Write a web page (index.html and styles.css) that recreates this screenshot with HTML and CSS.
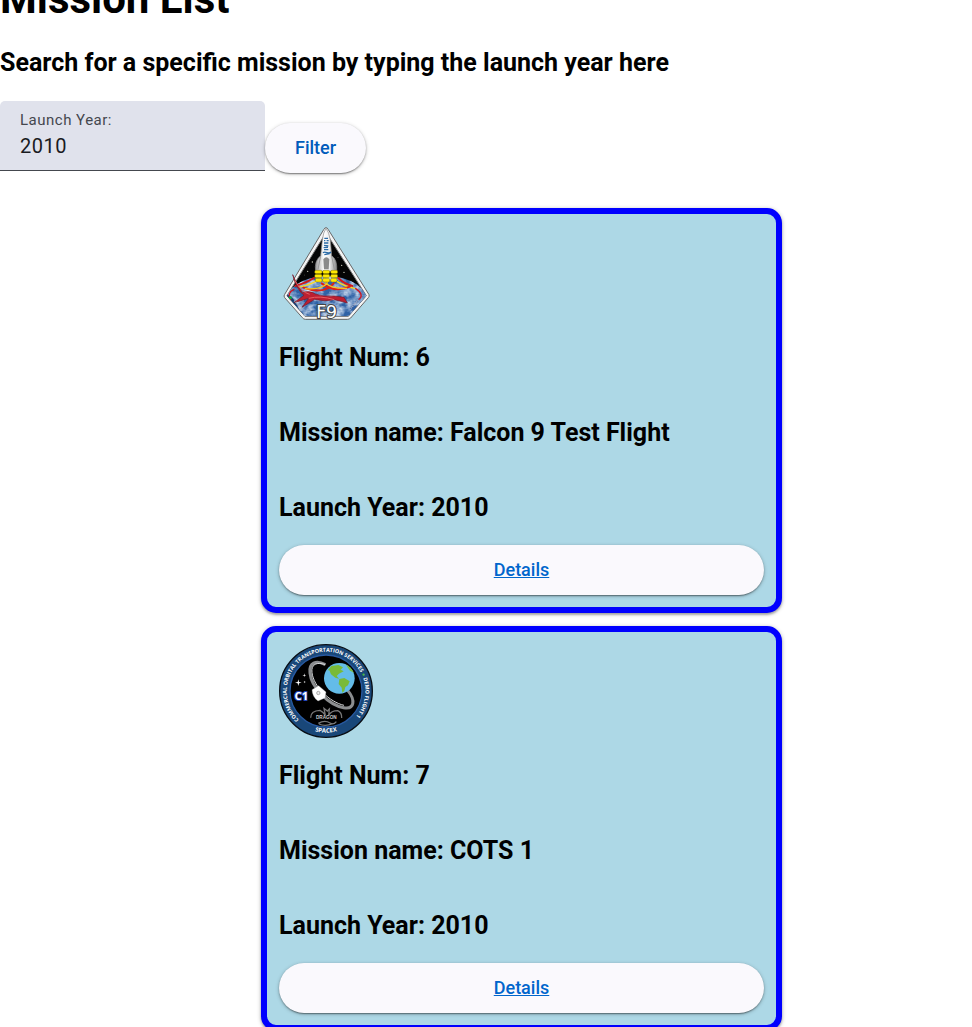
FILE: index.html
```html
<!DOCTYPE html>
<html lang="en">
<head>
<meta charset="utf-8">
<title>Mission List</title>
<link rel="stylesheet" href="styles.css">
</head>
<body>
<main class="page">
  <h1 class="page-title">Mission List</h1>
  <h2 class="page-hint">Search for a specific mission by typing the launch year here</h2>
  <form class="filter">
    <div class="field">
      <label class="field-label" for="year">Launch Year:</label>
      <input class="field-input" id="year" type="text" value="2010">
    </div>
    <button class="button" type="button">Filter</button>
  </form>

  <section class="missions">
    <article class="card">
      <svg class="patch" viewBox="12 18 282 282" role="img" aria-label="Falcon 9 Test Flight patch">
        <defs>
          <clipPath id="kite"><path d="M153 38 L274 227 L220 289 H90 L36 227Z"/></clipPath>
          <linearGradient id="hull"><stop offset="0" stop-color="#999"/><stop offset=".4" stop-color="#fff"/><stop offset=".65" stop-color="#eee"/><stop offset="1" stop-color="#888"/></linearGradient>
          <filter id="clouds" x="0" y="0" width="1" height="1">
            <feTurbulence type="fractalNoise" baseFrequency=".035 .05" numOctaves="3" seed="4"/>
            <feColorMatrix values="0 0 0 0 .8  0 0 0 0 .87  0 0 0 0 .96  2 1 0 0 -1.15"/>
            <feComposite in2="SourceGraphic" operator="in"/>
          </filter>
        </defs>
        <path d="M153 23 Q157 23 160 29 L282 224 Q284 229 280 233 L227 294 Q223 298 217 298 H91 Q86 298 82 293 L29 233 Q25 228 29 223 L146 29 Q149 23 153 23Z" fill="#f4f4f4" stroke="#666" stroke-width="3"/>
        <path d="M153 38 L274 227 L220 289 H90 L36 227Z" fill="#050505" stroke="#777" stroke-width="3"/>
        <g clip-path="url(#kite)">
          <ellipse cx="155" cy="254" rx="128" ry="86" fill="#2f62a6"/>
          <ellipse cx="155" cy="254" rx="128" ry="86" fill="#fff" filter="url(#clouds)"/>
          <path d="M34 222 q22 5 38 46 l-12 2 -30-42Z" fill="#163b70"/>
          <g fill="#ddc"><circle cx="112" cy="126" r="2"/><circle cx="98" cy="154" r="2"/><circle cx="200" cy="136" r="2"/><circle cx="207" cy="157" r="2"/><circle cx="88" cy="165" r="1"/><circle cx="189" cy="113" r="1"/></g>
        </g>
        <path d="M153 25 Q162 36 166 60 L170 107 Q188 119 185 154 H122 Q117 123 137 107 L142 60 Q145 36 153 25Z" fill="url(#hull)" stroke="#888" stroke-width="2"/>
        <path d="M145 118 q9-12 18 0 l-2 30 h-14Z" fill="#8a8a8a"/>
        <path d="M137 108 l-8 40 M170 108 l8 40" stroke="#999" stroke-width="3"/>
        <path d="M148 55h11m-12 7h4m4 0h6m-14 7h13m-13 7l13 2m-14 5l13-1m-12 7h13m-16 9c8-7 17 7 24-2m-20 8 16-3" fill="none" stroke="#2869a5" stroke-width="4"/>
        <g fill="none" stroke-linecap="round">
          <path d="M117 174 Q97 187 61 198 M190 174 Q205 190 232 198" stroke="#d21819" stroke-width="6"/>
          <path d="M122 184 Q102 195 70 202 M187 185 Q207 199 241 206" stroke="#f6d928" stroke-width="4"/>
          <path d="M85 203 Q146 225 176 190 M225 200 Q178 219 140 190" stroke="#dc2019" stroke-width="6"/>
          <path d="M91 206 Q143 210 157 188 M215 205 Q171 207 151 188" stroke="#f5c622" stroke-width="4"/>
          <path d="M57 208 Q35 218 47 239 M242 206 Q269 224 252 238" stroke="#cf1724" stroke-width="4"/>
        </g>
        <g fill="#ffe800" stroke="#4c4500" stroke-width="1"><rect x="119" y="151" width="22" height="10" rx="4"/><rect x="143" y="151" width="21" height="10" rx="4"/><rect x="167" y="151" width="21" height="10" rx="4"/><rect x="119" y="163" width="22" height="10" rx="4"/><rect x="143" y="163" width="21" height="10" rx="4"/><rect x="167" y="163" width="21" height="10" rx="4"/><rect x="121" y="175" width="20" height="11" rx="4"/><rect x="143" y="175" width="21" height="11" rx="4"/><rect x="167" y="175" width="19" height="11" rx="4"/></g>
        <path d="M53 164 L69 199 L83 218 Q103 210 121 222 Q145 231 177 228 L207 232 L217 249 L195 243 L178 239 Q147 246 119 238 L81 262 L101 235 L57 248 L87 226 Q63 207 53 164Z" fill="#bc1f31" stroke="#751628" stroke-width="2"/>
        <path d="M61 183 Q78 216 104 223 M101 235 Q135 226 178 239" fill="none" stroke="#e65d60" stroke-width="3"/>
        <circle cx="46" cy="233" r="5" fill="#16a34a"/>
        <path d="M58 242 l25 27 M250 240 l-25 28" stroke="#aab" stroke-width="5" stroke-dasharray="3 3"/>
        <text class="patch-f9" x="155" y="294" text-anchor="middle">F9</text>
      </svg>
      <h3 class="fact">Flight Num: 6</h3>
      <h3 class="fact">Mission name: Falcon 9 Test Flight</h3>
      <h3 class="fact">Launch Year: 2010</h3>
      <button class="button button-wide" type="button"><a class="link" href="#flight-6">Details</a></button>
    </article>

    <article class="card">
      <svg class="patch" viewBox="12 12 282 282" role="img" aria-label="COTS 1 patch">
        <defs>
          <path id="arc-top" d="M72 239 A118 118 0 1 1 234 239"/>
          <path id="arc-bottom" d="M64 241 A126 126 0 0 0 242 241"/>
          <clipPath id="globe"><circle cx="193" cy="115" r="46"/></clipPath>
        </defs>
        <circle cx="153" cy="153" r="139" fill="#194779" stroke="#080d14" stroke-width="4"/>
        <circle cx="153" cy="153" r="108" fill="#000" stroke="#2859a0" stroke-width="4"/>
        <text class="patch-ring"><textPath href="#arc-top">COMMERCIAL ORBITAL TRANSPORTATION SERVICES <tspan fill="#4bb749">●</tspan> DEMO FLIGHT 1</textPath></text>
        <text class="patch-ring patch-maker" text-anchor="middle"><textPath href="#arc-bottom" startOffset="50%">SPACEX</textPath></text>
        <path d="M151 74 C123 59 101 69 105 99 C109 142 160 194 206 203 C239 209 242 180 218 151" fill="none" stroke="#8b8d8f" stroke-width="9"/>
        <path d="M151 74 C127 65 107 72 111 98 C116 140 164 186 207 196" fill="none" stroke="#d6d7d8" stroke-width="3"/>
        <circle cx="193" cy="115" r="46" fill="#64bce8"/>
        <g clip-path="url(#globe)" fill="#79ba38">
          <path d="M158 91 L169 78 L190 75 L204 82 L197 89 L206 94 L192 101 L185 108 L192 116 L181 113 L168 103 L163 91Z"/>
          <path d="M193 117 L208 114 L224 124 L219 136 L211 141 L208 153 L202 158 L200 143 L191 132Z"/>
          <path d="M213 75 l20 8 5 17 -14-9Z"/>
        </g>
        <path d="M111 149 L131 137 L153 156 L150 174 L129 183 Q112 171 111 149Z" fill="#fff" stroke="#999" stroke-width="1"/>
        <circle cx="130" cy="159" r="5" fill="#eee" stroke="#888" stroke-width="2"/>
        <path d="M70 118 l2 8 8 2 -8 2 -2 8 -2-8 -8-2 8-2Z M88 100 l1 5 5 1 -5 1 -1 5 -1-5 -5-1 5-1Z M89 122 l1 3 3 1 -3 1 -1 3 -1-3 -3-1 3-1Z" fill="#fff"/>
        <text class="patch-c1" x="79" y="179" text-anchor="middle">C1</text>
        <path d="M107 233 Q107 212 135 211 Q145 216 151 226 L147 205 L157 213 L163 207 L161 226 Q169 212 188 212 Q201 218 200 234 M130 250 Q149 239 165 249 Q175 256 184 245 M132 252 Q151 261 173 251" fill="none" stroke="#777" stroke-width="4"/>
        <text class="patch-dragon" x="154" y="238" text-anchor="middle">DRAGON</text>
      </svg>
      <h3 class="fact">Flight Num: 7</h3>
      <h3 class="fact">Mission name: COTS 1</h3>
      <h3 class="fact">Launch Year: 2010</h3>
      <button class="button button-wide" type="button"><a class="link" href="#flight-7">Details</a></button>
    </article>
  </section>
</main>
</body>
</html>
```
FILE: styles.css
```css
* {
  box-sizing: border-box;
}

body {
  margin: 0;
  background: #fff;
  color: #000;
  font-family: Roboto, sans-serif;
}

.page {
  height: 100vh;
  overflow: hidden;
}

.page-title {
  margin: -25px 0 26px;
  font-size: 42px;
  line-height: 48px;
  font-weight: 700;
}

.page-hint {
  margin: 0 0 24px;
  font-size: 25px;
  line-height: 28px;
  font-weight: 700;
}

.filter {
  display: flex;
  align-items: flex-end;
  height: 72px;
}

.field {
  display: flex;
  flex-direction: column;
  align-self: flex-start;
  width: 265px;
  height: 70px;
  padding: 9px 20px;
  background: #e0e2ec;
  border-bottom: 1px solid #44474e;
  border-radius: 5px 5px 0 0;
}

.field-label {
  color: #44474e;
  font-size: 15px;
  line-height: 20px;
  letter-spacing: 0.5px;
}

.field-input {
  width: 100%;
  height: 32px;
  padding: 0;
  border: 0;
  outline: 0;
  background: transparent;
  color: #1a1b1f;
  font: 400 20px/32px Roboto, sans-serif;
  letter-spacing: 0.5px;
}

.button {
  height: 50px;
  padding: 0 30px;
  border: 0;
  border-radius: 25px;
  background: #faf9fd;
  box-shadow: 0 3px 1px -2px rgba(0, 0, 0, 0.2), 0 1px 2px rgba(0, 0, 0, 0.3), 0 1px 4px rgba(0, 0, 0, 0.2);
  color: #005cbb;
  font: 500 18px/24px Roboto, sans-serif;
}

.missions {
  display: grid;
  gap: 13px;
  max-width: 782px;
  margin-top: 35px;
  padding-left: 261px;
}

.card {
  display: flex;
  flex-direction: column;
  padding: 12px;
  border: 6px solid #00f;
  border-radius: 15px;
  background: #add8e6;
  box-shadow: 0 2px 2px rgba(0, 0, 0, 0.2), 0 1px 4px rgba(0, 0, 0, 0.3);
}

.patch {
  width: 94px;
  height: 94px;
}

.fact {
  margin: 0;
  padding: 24px 0 23px;
  font-size: 25px;
  line-height: 28px;
  font-weight: 700;
}

.button-wide {
  width: 100%;
}

.link {
  color: #0066cc;
  text-decoration: underline;
}

.patch-f9 {
  fill: #fff;
  stroke: #444;
  stroke-width: 6px;
  paint-order: stroke;
  font: 400 52px "DejaVu Sans", sans-serif;
}

.patch-ring {
  fill: #fff;
  font: 700 16px "Open Sans", sans-serif;
}

.patch-maker {
  font-size: 18px;
}

.patch-c1 {
  fill: #fff;
  stroke: #2446b8;
  stroke-width: 6px;
  paint-order: stroke;
  font: 700 34px "Open Sans", sans-serif;
}

.patch-dragon {
  fill: #ccc;
  font: 700 14px "Liberation Sans", sans-serif;
}
```
